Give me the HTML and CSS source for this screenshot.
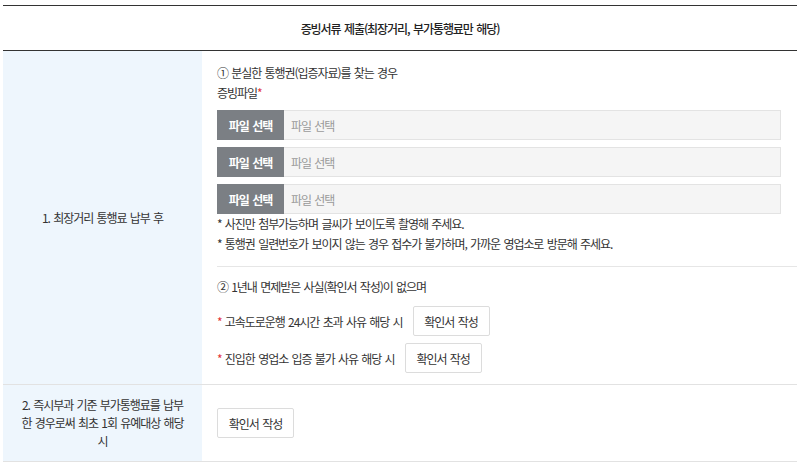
FILE: index.html
```html
<!DOCTYPE html>
<html lang="ko">
<head>
<meta charset="utf-8">
<link rel="stylesheet" href="styles.css">
</head>
<body>
<div class="wrap">
  <div class="table">
    <div class="head">증빙서류 제출(최장거리, 부가통행료만 해당)</div>
    <div class="row">
      <div class="th">1. 최장거리 통행료 납부 후</div>
      <div class="td">
        <div class="sec sec1">
          <p class="line">① 분실한 통행권(입증자료)를 찾는 경우</p>
          <p class="line">증빙파일<span class="req">*</span></p>
          <div class="files">
            <div class="file"><span class="fbtn">파일 선택</span><span class="fname">파일 선택</span></div>
            <div class="file"><span class="fbtn">파일 선택</span><span class="fname">파일 선택</span></div>
            <div class="file"><span class="fbtn">파일 선택</span><span class="fname">파일 선택</span></div>
          </div>
          <p class="line">* 사진만 첨부가능하며 글씨가 보이도록 촬영해 주세요.</p>
          <p class="line">* 통행권 일련번호가 보이지 않는 경우 접수가 불가하며, 가까운 영업소로 방문해 주세요.</p>
        </div>
        <div class="sec sec2">
          <p class="line">② 1년내 면제받은 사실(확인서 작성)이 없으며</p>
          <div class="opts">
            <div class="opt"><span><span class="req">*</span> 고속도로운행 24시간 초과 사유 해당 시</span><button class="cbtn">확인서 작성</button></div>
            <div class="opt"><span><span class="req">*</span> 진입한 영업소 입증 불가 사유 해당 시</span><button class="cbtn">확인서 작성</button></div>
          </div>
        </div>
      </div>
    </div>
    <div class="row row2">
      <div class="th">2. 즉시부과 기준 부가통행료를 납부한 경우로써 최초 1회 유예대상 해당 시</div>
      <div class="td td2">
        <button class="cbtn">확인서 작성</button>
      </div>
    </div>
  </div>
</div>
</body>
</html>
```

FILE: styles.css
```css
* { box-sizing: border-box; }
html, body { margin: 0; padding: 0; background: #fff; }
body {
  font-family: "Noto Sans CJK KR", "Noto Sans", sans-serif;
  font-size: 12px;
  letter-spacing: -1.05px;
  word-spacing: 1px;
  color: #333;
}
.wrap { padding: 5px 3px 0; }
.table { border-top: 1px solid #333; }
.head {
  height: 45px;
  border-bottom: 1px solid #333;
  display: flex;
  align-items: center;
  justify-content: center;
  font-weight: 500;
  color: #222;
}
.row {
  display: grid;
  grid-template-columns: 199px 1fr;
  border-bottom: 1px solid #e2e2e2;
}
.th {
  background: #eef6fd;
  display: flex;
  align-items: center;
  justify-content: center;
  text-align: center;
  padding: 0 17px;
  line-height: 18px;
  word-break: break-all;
  color: #333;
}
.td { padding: 0 16px 0 15px; }
.line { margin: 0; line-height: 20px; }
.req { color: #e2343a; }
.sec1 { padding: 12px 16px 12px 0; border-bottom: 1px solid #e6e6e6; margin-right: -16px; }
.sec2 { padding: 10px 0 11px; }
.files { display: flex; flex-direction: column; gap: 7px; margin: 7px 0 0; }
.file {
  display: flex;
  height: 30px;
  background: #f5f5f5;
  border: 1px solid #e3e3e3;
}
.fbtn {
  width: 67px;
  margin: -1px 0 -1px -1px;
  background: #7b7f84;
  color: #fff;
  font-weight: 700;
  display: flex;
  align-items: center;
  justify-content: center;
}
.fname {
  display: flex;
  align-items: center;
  padding-left: 7px;
  color: #9a9a9a;
}
.opts { display: flex; flex-direction: column; gap: 7px; margin-top: 9px; }
.opt { display: flex; align-items: center; gap: 10px; }
.cbtn {
  font: inherit;
  letter-spacing: inherit;
  word-spacing: inherit;
  color: #333;
  background: #fff;
  border: 1px solid #dcdcdc;
  border-radius: 2px;
  height: 30px;
  width: 77px;
  padding: 0;
  cursor: pointer;
}
.row2 { min-height: 77px; }
.td2 { display: flex; align-items: center; }
```
